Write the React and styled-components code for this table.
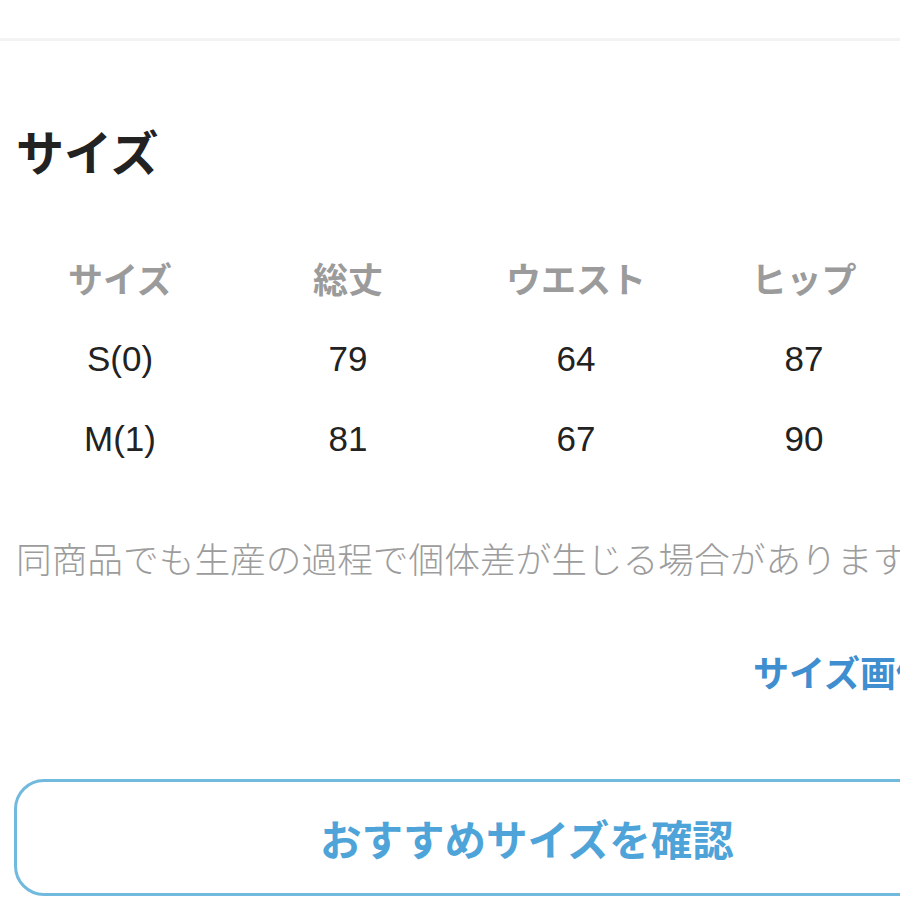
import React from "react";
import styled, { createGlobalStyle } from "styled-components";

const Global = createGlobalStyle`
  html, body { margin: 0; padding: 0; background: #fff; }
  body { overflow: hidden; width: 900px; height: 900px; }
  #root { width: 900px; height: 900px; overflow: hidden; }
`;

const Page = styled.div`
  width: 1056px;
  box-sizing: border-box;
  padding-top: 38px;
  font-family: "Liberation Sans", "Noto Sans CJK JP", sans-serif;
  color: #222;
`;

const Divider = styled.div`
  height: 3px;
  background: #f3f3f3;
`;

const Section = styled.section`
  padding: 0 16px;
  display: flex;
  flex-direction: column;
`;

const Title = styled.h2`
  margin: 79px 0 0;
  font-family: "Noto Sans CJK JP", sans-serif;
  font-size: 48px;
  line-height: 60px;
  font-weight: 700;
  color: #222;
`;

const Table = styled.div`
  margin: 59px 0 0 -10px;
  display: grid;
  grid-template-columns: repeat(4, 228px);
  grid-auto-rows: 80px;
`;

const Cell = styled.div`
  display: flex;
  align-items: center;
  justify-content: center;
  font-size: 35px;
  font-weight: ${(p) => (p.$head ? 700 : 400)};
  color: ${(p) => (p.$head ? "#9b9b9b" : "#222")};
  font-family: ${(p) =>
    p.$head ? '"Noto Sans CJK JP", sans-serif' : '"Liberation Sans", "Noto Sans CJK JP", sans-serif'};
  padding-bottom: ${(p) => (p.$head ? "4px" : "0")};
  box-sizing: border-box;
`;

const Note = styled.p`
  margin: 54px 0 0;
  font-family: "Noto Sans CJK JP", sans-serif;
  font-size: 35.7px;
  line-height: 50px;
  font-weight: 300;
  color: #9c9c9c;
  white-space: nowrap;
`;

const LinkRow = styled.div`
  margin-top: 63px;
  display: flex;
  justify-content: flex-end;
`;

const SizeLink = styled.a`
  font-family: "Noto Sans CJK JP", sans-serif;
  font-size: 36px;
  line-height: 50px;
  font-weight: 700;
  color: #3e8ed0;
  text-decoration: none;
  white-space: nowrap;
`;

const Button = styled.button`
  margin: 83px 0 0 -2px;
  height: 117px;
  border: 3px solid #72b9de;
  border-radius: 30px;
  background: #fff;
  display: flex;
  align-items: center;
  justify-content: center;
  font-family: "Noto Sans CJK JP", sans-serif;
  font-size: 41.5px;
  font-weight: 700;
  color: #4ea4d8;
  padding: 0;
`;

const headers = ["サイズ", "総丈", "ウエスト", "ヒップ"];
const rows = [
  ["S(0)", "79", "64", "87"],
  ["M(1)", "81", "67", "90"],
];

export default function App() {
  return (
    <>
      <Global />
      <Page>
        <Divider />
        <Section>
          <Title>サイズ</Title>
          <Table>
            {headers.map((h) => (
              <Cell key={h} $head>
                {h}
              </Cell>
            ))}
            {rows.map((r) =>
              r.map((v, i) => <Cell key={r[0] + i}>{v}</Cell>)
            )}
          </Table>
          <Note>同商品でも生産の過程で個体差が生じる場合があります。</Note>
          <LinkRow>
            <SizeLink href="#">サイズ画像を見る</SizeLink>
          </LinkRow>
          <Button>おすすめサイズを確認</Button>
        </Section>
      </Page>
    </>
  );
}
